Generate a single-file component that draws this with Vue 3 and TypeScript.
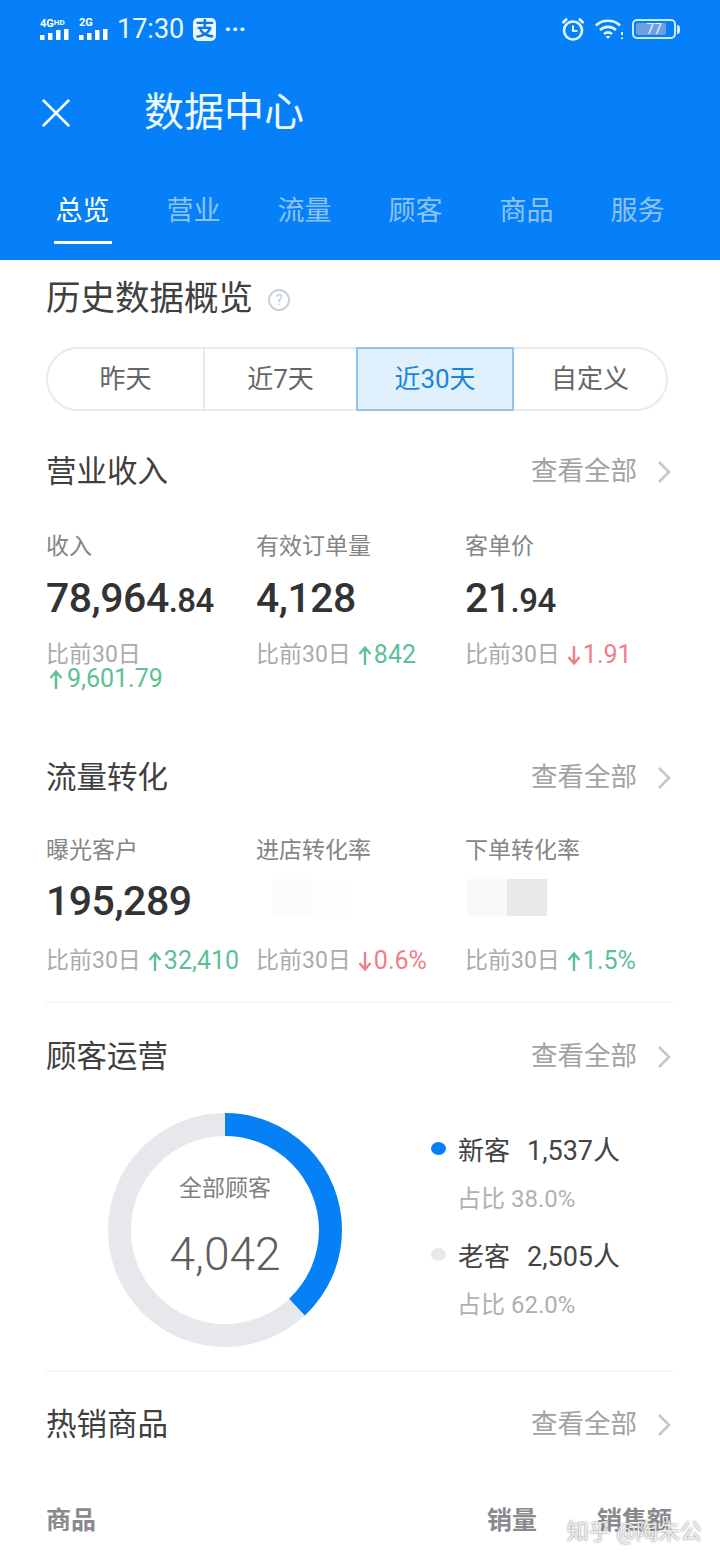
<script setup lang="ts">
interface Metric {
  label: string
  value?: string
  cents?: string
  delta?: string
  dir?: 'up' | 'down'
  stack?: boolean
  mask?: 'one' | 'two'
}

const tabs = ['总览', '营业', '流量', '顾客', '商品', '服务']
const ranges = ['昨天', '近7天', '近30天', '自定义']

const revenue: Metric[] = [
  { label: '收入', value: '78,964', cents: '.84', delta: '9,601.79', dir: 'up', stack: true },
  { label: '有效订单量', value: '4,128', delta: '842', dir: 'up' },
  { label: '客单价', value: '21', cents: '.94', delta: '1.91', dir: 'down' },
]

const traffic: Metric[] = [
  { label: '曝光客户', value: '195,289', delta: '32,410', dir: 'up' },
  { label: '进店转化率', mask: 'one', delta: '0.6%', dir: 'down' },
  { label: '下单转化率', mask: 'two', delta: '1.5%', dir: 'up' },
]

const customers = [
  { name: '新客', count: '1,537人', share: '占比 38.0%', cls: 'new' },
  { name: '老客', count: '2,505人', share: '占比 62.0%', cls: 'old' },
]

const radius = 105.5
const circumference = 2 * Math.PI * radius
const newDash = `${circumference * 0.38} ${circumference}`

const arrowPath = (dir?: string) =>
  dir === 'up' ? 'M7 20V3M1.5 9 7 2.5 12.5 9' : 'M7 1v17M1.5 12 7 18.5 12.5 12'
</script>

<template>
  <div class="page">
    <header class="top">
      <div class="status">
        <div class="net">
          <div class="sim">
            <span class="sim-label">4G<small>HD</small></span>
            <svg width="29" height="12" viewBox="0 0 29 12"><path fill="#fff" d="M0 6h4.5v5H0zM8 4h4.5v7H8zM16 1h4.5v10H16zM24 0h4.5v11H24z" /></svg>
          </div>
          <div class="sim">
            <span class="sim-label">2G</span>
            <svg width="29" height="12" viewBox="0 0 29 12"><path fill="#fff" d="M0 6h4.5v5H0zM8 4h4.5v7H8zM16 1h4.5v10H16zM24 0h4.5v11H24z" /></svg>
          </div>
        </div>
        <span class="clock">17:30</span>
        <span class="pay">支</span>
        <span class="more">···</span>
        <div class="status-right">
          <svg width="26" height="26" viewBox="0 0 26 26" fill="none" stroke="#e6f6ff" stroke-width="2.6">
            <circle cx="13" cy="14.5" r="9" />
            <path d="M13 9.5v5.5h4.5" stroke-width="2" />
            <path d="M2.5 7 7 2.8M23.5 7 19 2.8" />
          </svg>
          <svg width="28" height="24" viewBox="0 0 28 24" fill="none" stroke="#e6f6ff" stroke-width="2.6">
            <path d="M1 8.5C7.5 2.2 18.5 2.2 25 8.5" />
            <path d="M5 13C9.5 8.8 16.5 8.8 21 13" />
            <path d="M9 17C11.5 15 14.5 15 17 17" />
            <path d="M10.5 19 13 22l2.5-3z" fill="#e6f6ff" stroke="none" />
            <path d="M27 15v3M27 20.5v1.5" stroke-width="2" />
          </svg>
          <div class="battery">
            <div class="battery-body"><span class="battery-fill">77</span></div>
            <span class="battery-cap"></span>
          </div>
        </div>
      </div>

      <div class="title-row">
        <svg class="close" width="32" height="32" viewBox="0 0 32 32" fill="none" stroke="#fff" stroke-width="3">
          <path d="M2 2l28 28M30 2 2 30" />
        </svg>
        <h1>数据中心</h1>
      </div>

      <nav class="tabs">
        <div v-for="(tab, i) in tabs" :key="tab" class="tab" :class="{ active: i === 0 }">
          <span>{{ tab }}</span>
        </div>
      </nav>
    </header>

    <main class="content">
      <div class="history">
        <h2>历史数据概览</h2>
        <span class="help">?</span>
      </div>

      <div class="ranges">
        <div v-for="(r, i) in ranges" :key="r" class="range" :class="{ active: i === 2 }">{{ r }}</div>
      </div>

      <section class="block revenue">
        <div class="block-head">
          <h3>营业收入</h3>
          <a class="see-all"><span>查看全部</span>
            <svg width="14" height="24" viewBox="0 0 14 24" fill="none" stroke="#c6c8ca" stroke-width="2.6"><path d="M2 2l10 10L2 22" /></svg>
          </a>
        </div>
        <div class="metrics">
          <div v-for="m in revenue" :key="m.label" class="metric">
            <div class="label">{{ m.label }}</div>
            <div class="value">{{ m.value }}<small v-if="m.cents">{{ m.cents }}</small></div>
            <div class="delta" :class="{ stack: m.stack }">
              <span>比前30日</span>
              <span class="change" :class="m.dir">
                <svg width="14" height="20" viewBox="0 0 14 20" fill="none" stroke="currentColor" stroke-width="2.4"><path :d="arrowPath(m.dir)" /></svg>{{ m.delta }}
              </span>
            </div>
          </div>
        </div>
      </section>

      <section class="block traffic">
        <div class="block-head">
          <h3>流量转化</h3>
          <a class="see-all"><span>查看全部</span>
            <svg width="14" height="24" viewBox="0 0 14 24" fill="none" stroke="#c6c8ca" stroke-width="2.6"><path d="M2 2l10 10L2 22" /></svg>
          </a>
        </div>
        <div class="metrics">
          <div v-for="m in traffic" :key="m.label" class="metric">
            <div class="label">{{ m.label }}</div>
            <div class="value">
              {{ m.value }}
              <div v-if="m.mask" class="mask" :class="m.mask"><i></i><i></i></div>
            </div>
            <div class="delta">
              <span>比前30日</span>
              <span class="change" :class="m.dir">
                <svg width="14" height="20" viewBox="0 0 14 20" fill="none" stroke="currentColor" stroke-width="2.4"><path :d="arrowPath(m.dir)" /></svg>{{ m.delta }}
              </span>
            </div>
          </div>
        </div>
      </section>

      <section class="block customers">
        <div class="block-head">
          <h3>顾客运营</h3>
          <a class="see-all"><span>查看全部</span>
            <svg width="14" height="24" viewBox="0 0 14 24" fill="none" stroke="#c6c8ca" stroke-width="2.6"><path d="M2 2l10 10L2 22" /></svg>
          </a>
        </div>
        <div class="customer-body">
          <div class="donut">
            <svg width="236" height="236" viewBox="0 0 236 236" fill="none">
              <circle cx="118" cy="118" :r="radius" stroke="#e6e8eb" stroke-width="23" />
              <circle
                cx="118"
                cy="118"
                :r="radius"
                stroke="#0680f5"
                stroke-width="23"
                :stroke-dasharray="newDash"
                transform="rotate(-90 118 118)"
              />
            </svg>
            <div class="donut-text">
              <span class="donut-label">全部顾客</span>
              <span class="donut-value">4,042</span>
            </div>
          </div>
          <ul class="legend">
            <li v-for="c in customers" :key="c.name">
              <div class="legend-main">
                <i class="dot" :class="c.cls"></i>
                <span class="legend-name">{{ c.name }}</span>
                <span class="legend-count">{{ c.count }}</span>
              </div>
              <div class="legend-share">{{ c.share }}</div>
            </li>
          </ul>
        </div>
      </section>

      <section class="block hot">
        <div class="block-head">
          <h3>热销商品</h3>
          <a class="see-all"><span>查看全部</span>
            <svg width="14" height="24" viewBox="0 0 14 24" fill="none" stroke="#c6c8ca" stroke-width="2.6"><path d="M2 2l10 10L2 22" /></svg>
          </a>
        </div>
        <div class="table-head">
          <span class="col-name">商品</span>
          <span class="col-qty">销量</span>
          <span class="col-sales">销售额</span>
        </div>
      </section>
    </main>

    <div class="watermark">知乎 @陶朱公</div>
  </div>
</template>

<style>
html,
body {
  background: #fff;
}
</style>

<style scoped>
.page {
  position: relative;
  width: 720px;
  height: 1560px;
  overflow: hidden;
  background: #fff;
  font-family: Roboto, "Noto Sans CJK SC", sans-serif;
  color: #333;
}

h1,
h2,
h3,
ul {
  margin: 0;
  padding: 0;
  font-weight: 400;
}

ul {
  list-style: none;
}

/* header */
.top {
  height: 260px;
  background: #0680f8;
  color: #fff;
}

.status {
  display: flex;
  align-items: center;
  height: 56px;
  padding: 2px 40px 0;
  box-sizing: border-box;
}

.net {
  display: flex;
  gap: 10px;
}

.sim {
  display: flex;
  flex-direction: column;
  width: 29px;
}

.sim-label {
  height: 12px;
  font-size: 11px;
  line-height: 12px;
  font-weight: 700;
  white-space: nowrap;
}

.sim-label small {
  font-size: 8px;
  vertical-align: 2px;
}

.clock {
  margin-left: 9px;
  font-size: 27px;
  color: #eef8ff;
}

.pay {
  width: 23px;
  height: 23px;
  margin-left: 9px;
  border-radius: 5px;
  background: #eaf6ff;
  color: #0a78dc;
  font-size: 19px;
  font-weight: 700;
  line-height: 23px;
  text-align: center;
}

.more {
  margin-left: 8px;
  font-size: 24px;
  font-weight: 700;
  line-height: 24px;
}

.status-right {
  display: flex;
  align-items: center;
  gap: 9px;
  margin-left: auto;
}

.battery {
  display: flex;
  align-items: center;
}

.battery-body {
  width: 44px;
  height: 20px;
  padding: 2px;
  border: 2px solid #cfeaff;
  border-radius: 5px;
  box-sizing: border-box;
}

.battery-fill {
  display: block;
  width: 30px;
  height: 12px;
  padding-right: 4px;
  border-radius: 2px;
  background: #6f9fe0;
  box-sizing: border-box;
  color: #e6f2ff;
  font-size: 14px;
  line-height: 12px;
  text-align: right;
}

.battery-cap {
  width: 3px;
  height: 9px;
  margin-left: 1px;
  border-radius: 0 3px 3px 0;
  background: #cfeaff;
}

.title-row {
  display: flex;
  align-items: center;
  height: 56px;
  margin-top: 29px;
  padding-left: 41px;
}

.close {
  width: 30px;
  height: 30px;
}

h1 {
  margin-left: 73px;
  font-size: 40px;
  line-height: 56px;
  color: #eef8ff;
}

.tabs {
  display: grid;
  grid-template-columns: repeat(6, 1fr);
  margin-top: 45px;
  padding: 0 27px;
}

.tab {
  text-align: center;
  font-size: 27px;
  color: #8fc3f7;
}

.tab span {
  display: inline-block;
  width: 58px;
  height: 58px;
  line-height: 50px;
  box-sizing: border-box;
}

.tab.active {
  color: #fff;
}

.tab.active span {
  border-bottom: 3px solid #fff;
}

/* body */
.content {
  padding: 18px 46px 0;
}

.history {
  display: flex;
  align-items: center;
  height: 40px;
}

h2 {
  font-size: 34.5px;
  line-height: 40px;
  color: #404040;
}

.help {
  width: 18px;
  height: 18px;
  margin: 4px 0 0 15px;
  border: 2px solid #c5d2dc;
  border-radius: 50%;
  color: #c0ccd6;
  font-size: 15px;
  line-height: 18px;
  text-align: center;
}

.ranges {
  display: grid;
  grid-template-columns: 155px 153px 158px 1fr;
  width: 622px;
  height: 64px;
  margin-top: 29px;
  border: 2px solid #e8eaec;
  border-radius: 32px;
  box-sizing: border-box;
}

.range {
  display: flex;
  align-items: center;
  justify-content: center;
  padding-bottom: 6px;
  box-sizing: border-box;
  font-size: 26px;
  color: #666;
}

.range + .range {
  border-left: 2px solid #e8eaec;
}

.range.active {
  margin: -2px 0;
  border: 2px solid #93c5ec;
  background: #e1f0fd;
  color: #1b86d9;
}

.range.active + .range {
  border-left: 0;
}

.block-head {
  display: flex;
  align-items: center;
  justify-content: space-between;
  height: 40px;
}

h3 {
  font-size: 30.5px;
  line-height: 40px;
  color: #404040;
}

.see-all {
  display: flex;
  align-items: center;
  gap: 20px;
  padding: 0 3px 0 0;
  font-size: 26.5px;
  color: #a2a2a2;
}

.see-all span {
  margin-bottom: 7px;
}

.revenue {
  margin-top: 41px;
}

.traffic {
  margin-top: 67px;
  padding-bottom: 28px;
  border-bottom: 2px solid #f5f5f5;
}

.customers {
  margin-top: 34px;
  padding-bottom: 22px;
  border-bottom: 2px solid #f5f5f5;
}

.hot {
  margin-top: 33px;
}

.metrics {
  display: grid;
  grid-template-columns: 210px 209px 1fr;
  margin-top: 38px;
}

.revenue .metrics {
  margin-top: 40px;
}

.label {
  height: 30px;
  font-size: 23px;
  line-height: 30px;
  color: #858585;
}

.value {
  position: relative;
  height: 52px;
  margin-top: 10px;
  font-size: 41px;
  font-weight: 500;
  letter-spacing: -0.5px;
  line-height: 52px;
  color: #333;
}

.traffic .value {
  margin-top: 9px;
}

.value small {
  font-size: 33px;
}

.delta {
  display: flex;
  align-items: center;
  gap: 4px;
  margin-top: 19px;
  font-size: 23px;
  line-height: 24px;
  color: #ababab;
  white-space: nowrap;
}

.traffic .delta {
  margin-top: 22px;
}

.delta.stack {
  flex-direction: column;
  align-items: flex-start;
  gap: 0;
}

.change {
  display: flex;
  align-items: center;
  gap: 2px;
  margin-left: 3px;
  font-size: 25px;
}

.stack .change {
  gap: 4px;
}

.change.up {
  color: #5cc095;
}

.change.down {
  color: #ee7f8a;
}

.change svg {
  flex: none;
}

.mask {
  position: absolute;
  top: 4px;
  display: flex;
  height: 37px;
}

.mask.one {
  left: 16px;
}

.mask.one i {
  width: 40px;
  background: #fbfbfb;
}

.mask.two {
  left: 2px;
}

.mask.two i {
  width: 40px;
  background: #f9f9f9;
}

.mask.two i + i {
  background: #e9e9e9;
}

.mask.one i + i {
  background: #fefefe;
}

.customer-body {
  display: flex;
  align-items: center;
  margin-top: 35px;
  padding-left: 61px;
}

.donut {
  position: relative;
  width: 236px;
  height: 236px;
}

.donut-text {
  position: absolute;
  inset: 0;
  display: flex;
  flex-direction: column;
  align-items: center;
  padding-top: 62px;
}

.donut-label {
  font-size: 23px;
  line-height: 30px;
  color: #808080;
}

.donut-value {
  margin-top: 24px;
  font-size: 46px;
  font-weight: 300;
  line-height: 52px;
  color: #5e5e5e;
}

.legend {
  margin: 0 0 12px 88px;
}

.legend li + li {
  margin-top: 21px;
}

.legend-main {
  display: flex;
  align-items: center;
  height: 40px;
}

.dot {
  width: 15px;
  height: 13px;
  margin-right: 12px;
  border-radius: 50%;
  background: #e6e8eb;
}

.dot.new {
  background: #0680f5;
}

.legend-name,
.legend-count {
  font-size: 26px;
  color: #444;
}

.legend-count {
  margin-left: 17px;
  font-size: 27px;
}

.legend-share {
  margin: 15px 0 0 26px;
  font-size: 24px;
  line-height: 30px;
  color: #b0b0b0;
}

.table-head {
  position: relative;
  display: grid;
  grid-template-columns: 441px 110px 1fr;
  margin-top: 58px;
  font-size: 25px;
  font-weight: 700;
  line-height: 36px;
  color: #8a8a8e;
}

.col-sales {
  padding-right: 2px;
  text-align: right;
}

.watermark {
  position: absolute;
  top: 1517px;
  right: 18px;
  font-size: 22px;
  line-height: 30px;
  color: rgba(255, 255, 255, 0.85);
  text-shadow: 0 0 2px rgba(90, 90, 90, 0.9);
}
</style>
